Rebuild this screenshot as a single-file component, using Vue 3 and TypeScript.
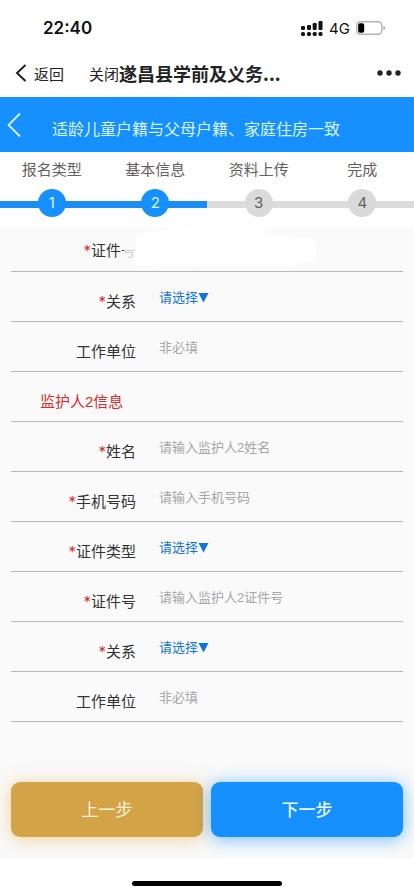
<script setup lang="ts">
import { reactive } from 'vue'

interface Step {
  label: string
  done: boolean
}

interface Field {
  id: string
  kind: 'text' | 'select' | 'heading'
  label: string
  required?: boolean
  placeholder?: string
  masked?: boolean
}

const steps: Step[] = [
  { label: '报名类型', done: true },
  { label: '基本信息', done: true },
  { label: '资料上传', done: false },
  { label: '完成', done: false },
]

const fields: Field[] = [
  { id: 'g1-number', kind: 'text', label: '证件号', required: true, masked: true },
  { id: 'g1-relation', kind: 'select', label: '关系', required: true },
  { id: 'g1-work', kind: 'text', label: '工作单位', placeholder: '非必填' },
  { id: 'g2-heading', kind: 'heading', label: '监护人2信息' },
  { id: 'g2-name', kind: 'text', label: '姓名', required: true, placeholder: '请输入监护人2姓名' },
  { id: 'g2-phone', kind: 'text', label: '手机号码', required: true, placeholder: '请输入手机号码' },
  { id: 'g2-type', kind: 'select', label: '证件类型', required: true },
  { id: 'g2-number', kind: 'text', label: '证件号', required: true, placeholder: '请输入监护人2证件号' },
  { id: 'g2-relation', kind: 'select', label: '关系', required: true },
  { id: 'g2-work', kind: 'text', label: '工作单位', placeholder: '非必填' },
]

const values = reactive<Record<string, string>>(
  Object.fromEntries(fields.map((field) => [field.id, ''])),
)
</script>

<template>
  <div class="page">
    <div class="status">
      <span class="time">22:40</span>
      <div class="indicators">
        <svg class="signal" viewBox="0 0 22 15" aria-hidden="true">
          <g fill="#111">
            <rect x="0" y="5" width="4" height="4" rx="1.2" />
            <rect x="6" y="4" width="4" height="5" rx="1.2" />
            <rect x="11.700" y="2" width="4" height="7" rx="1.2" />
            <rect x="17.500" y="0" width="4" height="9" rx="1.2" />
            <rect x="0" y="11" width="4" height="4" rx="1.5" />
            <rect x="6" y="11" width="4" height="4" rx="1.5" />
            <rect x="11.700" y="11" width="4" height="4" rx="1.5" />
            <rect x="17.500" y="11" width="4" height="4" rx="1.5" />
          </g>
        </svg>
        <span class="network">4G</span>
        <svg class="battery" viewBox="0 0 30 14" aria-hidden="true">
          <rect x="0.8" y="0.8" width="25" height="12.4" rx="3.6" fill="#fff" stroke="#b4b4b4" stroke-width="1.4" />
          <rect x="2.200" y="2.200" width="6" height="9.6" rx="1.8" fill="#000" />
          <path d="M27.300 4.700 Q29.400 5.500 29.400 7 Q29.400 8.500 27.300 9.300 Z" fill="#b4b4b4" />
        </svg>
      </div>
    </div>

    <nav class="nav">
      <button class="back" type="button">
        <svg class="back-icon" viewBox="0 0 12 18" aria-hidden="true">
          <path d="M10.500 1 L2 9 L10.500 17" fill="none" stroke="#222" stroke-width="2" />
        </svg>
        返回
      </button>
      <button class="close" type="button">关闭</button>
      <span class="nav-title">遂昌县学前及义务...</span>
      <button class="more" type="button" aria-label="更多">
        <svg class="more-icon" viewBox="0 0 24 6" aria-hidden="true">
          <circle cx="3" cy="3" r="2.700" />
          <circle cx="12" cy="3" r="2.700" />
          <circle cx="21" cy="3" r="2.700" />
        </svg>
      </button>
    </nav>

    <header class="banner">
      <button class="banner-back" type="button" aria-label="返回">
        <svg class="banner-icon" viewBox="0 0 14 26" aria-hidden="true">
          <path d="M13 1.500 L1.500 13 L13 24.500" fill="none" stroke="#d8f4ff" stroke-width="1.8" />
        </svg>
      </button>
      <h1 class="banner-title">适龄儿童户籍与父母户籍、家庭住房一致</h1>
    </header>

    <ol class="steps">
      <li v-for="(step, index) in steps" :key="step.label" class="step" :class="{ done: step.done }">
        <span class="step-label">{{ step.label }}</span>
        <span class="dot">{{ index + 1 }}</span>
      </li>
    </ol>

    <form class="form" @submit.prevent>
      <div class="rows">
        <div v-for="field in fields" :key="field.id" class="row" :class="{ first: field.masked }">
          <h2 v-if="field.kind === 'heading'" class="heading">{{ field.label }}</h2>
          <template v-else>
            <label class="label" :for="field.id"><span v-if="field.required" class="star">*</span>{{ field.label }}</label>
            <span v-if="field.kind === 'select'" class="picker">
              <select :id="field.id" v-model="values[field.id]" class="select">
                <option value="">请选择</option>
              </select>
              <svg class="caret" viewBox="0 0 11 10" aria-hidden="true">
                <path d="M0.500 0 H10.500 L5.500 9.500 Z" fill="#1273dc" />
              </svg>
            </span>
            <input
              v-else
              :id="field.id"
              v-model="values[field.id]"
              class="input"
              type="text"
              :placeholder="field.placeholder"
            />
            <svg v-if="field.masked" class="mask" viewBox="0 0 196 39" aria-hidden="true">
              <path d="M14 9 Q20 4 30 3 L44 2 Q60 0 84 0 H146 V7 L192 11 Q196 14 194 33 L178 35 L170 39 H84 L14 38 Z" fill="#fff" />
              <path d="M0 8 H15 V20 H0 Z" fill="#fafafa" />
              <path d="M3 20 H15 V38 H0 V25 H3 Z" fill="#fafafa" opacity="0.78" />
            </svg>
          </template>
        </div>
      </div>

      <div class="actions">
        <button class="action prev" type="button">上一步</button>
        <button class="action next" type="submit">下一步</button>
      </div>
    </form>

    <footer class="home"><span class="home-bar"></span></footer>
  </div>
</template>

<style>
body {
  margin: 0;
  background: #fff;
}
</style>

<style scoped>
.page {
  display: flex;
  flex-direction: column;
  min-height: 100vh;
  background: #fefefe;
  color: #333;
  font-family: "Liberation Sans", "Noto Sans CJK SC", sans-serif;
  font-size: 15px;
}

button,
input,
select {
  margin: 0;
  padding: 0;
  border: 0;
  background: none;
  color: inherit;
  font: inherit;
}

.status {
  display: flex;
  align-items: center;
  justify-content: space-between;
  height: 56px;
  padding: 0 28px 0 43px;
  color: #111;
  font-family: Inter, sans-serif;
}

.time {
  font-size: 17px;
  font-weight: 600;
}

.indicators {
  display: flex;
  align-items: center;
  gap: 6px;
}

.signal {
  width: 22px;
  height: 15px;
}

.network {
  font-size: 15px;
}

.battery {
  width: 30px;
  height: 14px;
}

.nav {
  display: flex;
  align-items: center;
  height: 34px;
  padding: 0 13px 7px 15px;
  color: #222;
}

.back {
  display: flex;
  align-items: center;
  gap: 7px;
  margin-right: 25px;
}

.back-icon {
  width: 12px;
  height: 18px;
}

.nav-title {
  flex: 1;
  font-family: "Noto Sans CJK SC", sans-serif;
  font-size: 18px;
  font-weight: 700;
  line-height: 24px;
  white-space: nowrap;
}

.more {
  display: flex;
}

.more-icon {
  width: 24px;
  height: 6px;
  fill: #222;
}

.banner {
  display: flex;
  align-items: center;
  height: 55px;
  background: #168fff;
  color: #d8f4ff;
}

.banner-back {
  display: flex;
  width: 52px;
  padding-left: 7px;
}

.banner-icon {
  width: 14px;
  height: 26px;
}

.banner-title {
  margin: 0;
  padding-top: 6px;
  font-size: 16px;
  font-weight: 400;
}

.steps {
  display: flex;
  height: 76px;
  margin: 0;
  padding: 0;
  background: linear-gradient(to right, #1c8df0 50%, #dcdcdc 50%) 0 49px / 100% 7px no-repeat;
  list-style: none;
}

.step {
  display: flex;
  flex: 1;
  flex-direction: column;
  align-items: center;
  gap: 8px;
  padding-top: 7px;
  color: #665f5f;
}

.step-label {
  line-height: 22px;
}

.dot {
  width: 28px;
  height: 28px;
  border-radius: 14px;
  background: #dadada;
  font-family: Inter, sans-serif;
  font-size: 15px;
  line-height: 28px;
  text-align: center;
}

.done .dot {
  background: #168fff;
  color: #d8f4ff;
}

.form {
  flex: 1;
  padding: 0 11px 21px;
  background: #fafafa;
}

.row {
  position: relative;
  display: flex;
  align-items: center;
  gap: 23px;
  box-sizing: border-box;
  height: 50px;
  border-bottom: 1px solid #b8b8b8;
}

.first {
  height: 44px;
}

.label {
  width: 125px;
  padding-top: 10px;
  line-height: 22px;
  text-align: right;
}

.first .label {
  padding-top: 3px;
}

.star,
.heading {
  color: #d92c2c;
}

.star {
  font-family: Inter, sans-serif;
}

.heading {
  margin: 0;
  padding: 10px 0 0 29px;
  font-size: 15px;
  font-weight: 400;
  line-height: 22px;
}

.input {
  flex: 1;
  min-width: 0;
  height: 20px;
  padding-top: 2px;
  font-size: 13px;
  outline: none;
}

.input::placeholder {
  color: #a6a6a6;
  opacity: 1;
}

.picker {
  display: flex;
  align-items: center;
  padding-top: 2px;
}

.select {
  width: 39px;
  height: 20px;
  appearance: none;
  color: #1273dc;
  font-size: 13px;
}

.caret {
  width: 11px;
  height: 10px;
}

.mask {
  position: absolute;
  top: 0;
  left: 110px;
  width: 196px;
  height: 39px;
  pointer-events: none;
}

.actions {
  display: flex;
  gap: 8px;
  margin-top: 60px;
}

.action {
  flex: 1;
  height: 55px;
  padding-bottom: 2px;
  border-radius: 9px;
  font-size: 17px;
}

.prev {
  background: #d3a347;
  box-shadow: 0 2px 18px rgba(232, 165, 60, 0.5);
  color: #fff3da;
}

.next {
  background: #168fff;
  box-shadow: 0 2px 18px rgba(22, 143, 255, 0.6);
  color: #e6f8ff;
  font-weight: 500;
}

.home {
  display: flex;
  justify-content: center;
  padding: 22px 0 9px;
  background: #fff;
}

.home-bar {
  width: 36%;
  height: 5px;
  border-radius: 3px;
  background: #000;
}
</style>
